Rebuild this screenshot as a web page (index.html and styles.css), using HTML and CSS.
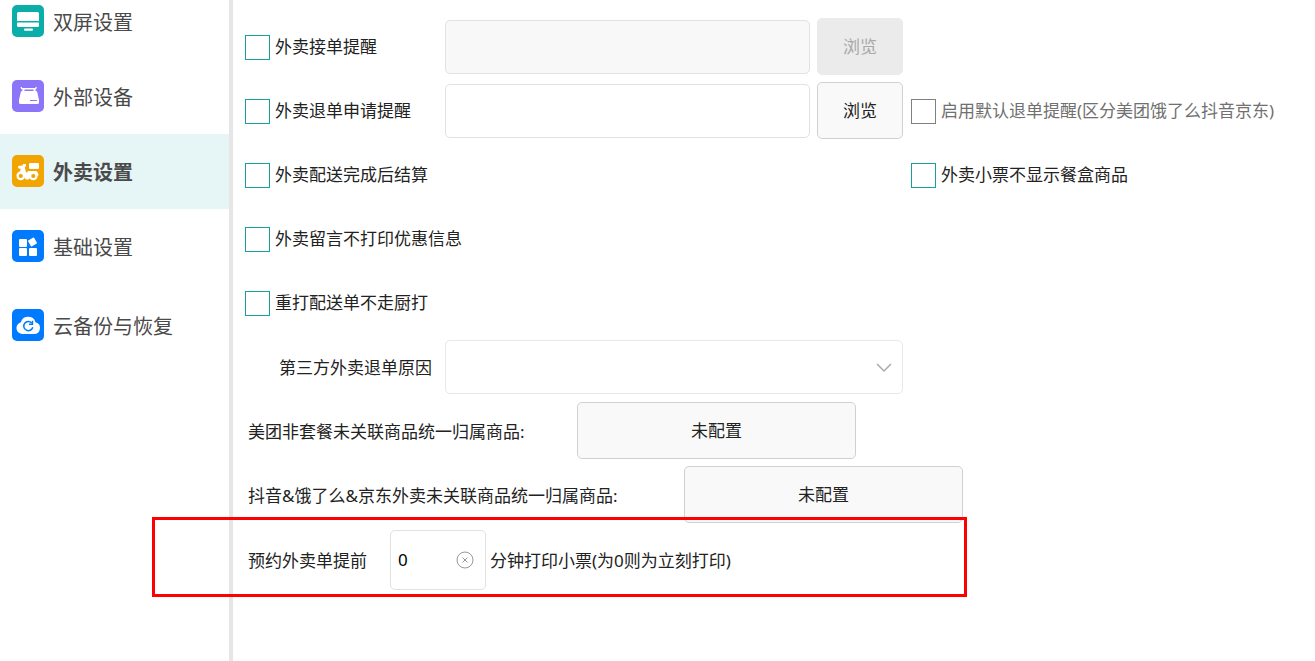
FILE: index.html
```html
<!DOCTYPE html>
<html lang="zh-CN">
<head>
<meta charset="utf-8">
<meta name="viewport" content="width=device-width, initial-scale=1.0">
<title>外卖设置</title>
<link rel="stylesheet" href="styles.css">
</head>
<body>

<div class="page">

  <!-- Sidebar -->
  <nav class="sidebar">
    <a class="nav-item" href="#screen">
      <svg class="nav-icon" viewBox="0 0 32 32">
        <rect width="32" height="32" rx="5" fill="#0aada8"/>
        <path d="M6.500 7h19q1.500 0 1.500 1.500V16H5V8.500Q5 7 6.500 7zM5 17.500h22v3q0 1.500-1.500 1.500h-19Q5 22 5 20.500z" fill="#fff"/>
        <rect x="12" y="23.500" width="9" height="2.200" rx="1" fill="#fff"/>
      </svg>
      <span>双屏设置</span>
    </a>
    <a class="nav-item" href="#device">
      <svg class="nav-icon" viewBox="0 0 32 32">
        <rect width="32" height="32" rx="5" fill="#8c75f9"/>
        <path d="M9 7.200l1 1.600h13.500l1-1.600" fill="none" stroke="#fff" stroke-width="1.400"/>
        <path d="M10 11h14q1 0 1.200 1L27 20v2.500q0 1.500-1.500 1.500h-17Q7 24 7 22.500V20l1.800-8q.2-1 1.200-1z" fill="#fff"/>
        <path d="M11.500 9v2.500M22.500 9v2.500" stroke="#fff" stroke-width="2"/>
        <path d="M18.500 20.500h6" stroke="#8c75f9" stroke-width="1.200" stroke-linecap="round"/>
      </svg>
      <span>外部设备</span>
    </a>
    <a class="nav-item active" href="#takeout">
      <svg class="nav-icon" viewBox="0 0 32 32">
        <rect width="32" height="32" rx="5" fill="#f2a500"/>
        <rect x="17" y="8" width="10" height="6" rx="1.200" fill="#fff"/>
        <path d="M6 12q0-1.300 1.200-1.300l3.300-.2.600-1.500h2.900v2.500l-1.200.3.800 4.200q.3 1.500 1.400 1.500.8 0 .8-1.500h8.500q1.500.8 2 3l.2 1.500-2 .5H8l-3.500-.5q.3-3 3.500-4.200l.8-2.500-2.300-.3z" fill="#fff"/>
        <circle cx="8.800" cy="21" r="3.200" fill="#f2a500" stroke="#fff" stroke-width="2.200"/>
        <circle cx="21.300" cy="21" r="3.200" fill="#f2a500" stroke="#fff" stroke-width="2.200"/>
        <path d="M12 19.500h6V23l-1.500 1.500H14L12.500 23z" fill="#fff"/>
      </svg>
      <span>外卖设置</span>
    </a>
    <a class="nav-item" href="#basic">
      <svg class="nav-icon" viewBox="0 0 32 32">
        <rect width="32" height="32" rx="5" fill="#007bff"/>
        <g fill="#fff">
          <rect x="7" y="9" width="8" height="8" rx="1"/>
          <rect x="7" y="18" width="8" height="8" rx="1"/>
          <rect x="17" y="18" width="8" height="8" rx="1"/>
          <rect x="17" y="8.500" width="7" height="7" rx="1" transform="rotate(-30 20.500 12)"/>
        </g>
      </svg>
      <span>基础设置</span>
    </a>
    <a class="nav-item last" href="#backup">
      <svg class="nav-icon" viewBox="0 0 32 32">
        <rect width="32" height="32" rx="5" fill="#007bff"/>
        <path d="M10.500 25a6 6 0 0 1-1.600-11.800 7.600 7.600 0 0 1 14.600 0A6 6 0 0 1 22 25z" fill="#fff"/>
        <path d="M19.800 14a4.600 4.600 0 1 0 1 4.300" fill="none" stroke="#007bff" stroke-width="1.500"/>
        <path d="M20.500 11.700v3.500H17" fill="none" stroke="#007bff" stroke-width="1.400"/>
      </svg>
      <span>云备份与恢复</span>
    </a>
  </nav>

  <!-- Settings -->
  <main class="settings">
    <div class="row">
      <label class="check"><input type="checkbox">外卖接单提醒</label>
      <input class="field" type="text" aria-label="外卖接单提醒" disabled>
      <button class="btn" type="button" disabled>浏览</button>
    </div>

    <div class="row">
      <label class="check"><input type="checkbox">外卖退单申请提醒</label>
      <input class="field" type="text" aria-label="外卖退单申请提醒">
      <button class="btn" type="button">浏览</button>
      <label class="check muted"><input type="checkbox" disabled>启用默认退单提醒(区分美团饿了么抖音京东)</label>
    </div>

    <div class="row">
      <label class="check"><input type="checkbox">外卖配送完成后结算</label>
      <label class="check extra"><input type="checkbox">外卖小票不显示餐盒商品</label>
    </div>

    <div class="row">
      <label class="check"><input type="checkbox">外卖留言不打印优惠信息</label>
    </div>

    <div class="row">
      <label class="check"><input type="checkbox">重打配送单不走厨打</label>
    </div>

    <div class="row">
      <label class="reason" for="reason">第三方外卖退单原因</label>
      <div class="select-wrap">
        <select class="select" id="reason"><option></option></select>
        <svg class="arrow" viewBox="0 0 16 10"><path d="M1 1l7 7 7-7" fill="none" stroke="#aaa" stroke-width="1.500"/></svg>
      </div>
    </div>

    <div class="line">
      <label class="goods" for="meituan">美团非套餐未关联商品统一归属商品:</label>
      <button class="btn wide" id="meituan" type="button">未配置</button>
    </div>

    <div class="line">
      <label class="goods long" for="douyin">抖音&amp;饿了么&amp;京东外卖未关联商品统一归属商品:</label>
      <button class="btn wide" id="douyin" type="button">未配置</button>
    </div>

    <div class="line advance">
      <label class="minutes-label" for="minutes">预约外卖单提前</label>
      <div class="minutes">
        <input id="minutes" type="text" value="0">
        <button class="clear" type="button" aria-label="清除">
          <svg viewBox="0 0 18 18" fill="none" stroke="#999"><circle cx="9" cy="9" r="8"/><path d="M6.500 6.500l5 5M11.500 6.500l-5 5"/></svg>
        </button>
      </div>
      <span class="unit">分钟打印小票(为0则为立刻打印)</span>
      <div class="highlight"></div>
    </div>
  </main>

</div>

</body>
</html>
```
FILE: styles.css
```css
* {box-sizing: border-box;}

body {
  margin: 0;
  background: #fff;
  color: #222;
  font-family: "Noto Sans", "Noto Sans CJK SC", sans-serif;
  font-size: 17px;
  line-height: 24px;
  overflow: hidden;
}

input, button, select {
  margin: 0;
  font: inherit;
  color: inherit;
}

.page {
  display: flex;
  min-height: 100vh;
}

/* sidebar, scrolled a little way down */
.sidebar {
  flex: none;
  width: 233px;
  margin-top: -16px;
  border-right: 4px solid #e6e6e6;
}

.nav-item {
  display: flex;
  align-items: center;
  gap: 9px;
  height: 75px;
  padding-left: 12px;
  color: #4a4a4a;
  font-size: 20px;
  text-decoration: none;
}

.nav-item span {
  padding-top: 2px;
}

.nav-item.active {
  background: #e6f5f5;
  font-weight: bold;
}

.nav-item.last {
  height: 83px;
}

.nav-icon {
  width: 32px;
  height: 32px;
  margin-bottom: 2px;
}

/* settings */
.settings {
  flex: 1;
  min-width: 0;
  padding: 15px 12px 0;
  white-space: nowrap;
}

.row {
  display: grid;
  grid-template-columns: 200px 372px 94px 1fr;
  align-items: center;
  height: 64px;
}

.line {
  display: flex;
  align-items: center;
  height: 64px;
  padding-left: 3px;
}

.check {
  display: flex;
  align-items: center;
  gap: 5px;
}

.check input {
  appearance: none;
  flex: none;
  width: 25px;
  height: 25px;
  border: 1px solid #1a9e9c;
  background: #fff;
}

.check input:checked {
  background: #1a9e9c;
}

.check input:disabled {
  border-color: #808080;
}

.muted {
  color: #707070;
}

.extra {
  grid-column: 4;
}

.field {
  width: 365px;
  height: 54px;
  padding: 0 8px;
  border: 1px solid #e2e2e2;
  border-radius: 5px;
  background: #fff;
}

.field:disabled {
  background: #f8f8f8;
}

.btn {
  width: 86px;
  height: 57px;
  margin-bottom: 2px;
  padding: 2px 0 0;
  border: 1px solid #d0d0d0;
  border-radius: 5px;
  background: #f9f9f9;
}

.btn:disabled {
  border-color: #ebebeb;
  background: #ebebeb;
  color: #a8a8a8;
}

.btn.wide {
  width: 279px;
}

.reason {
  padding: 2px 13px 0 0;
  text-align: right;
}

.select-wrap {
  position: relative;
  grid-column: 2 / 4;
  width: 458px;
}

.select {
  display: block;
  appearance: none;
  width: 100%;
  height: 54px;
  padding: 0 40px 0 8px;
  border: 1px solid #e8e8e8;
  border-radius: 5px;
  background: #fff;
}

.arrow {
  position: absolute;
  top: 23px;
  right: 11px;
  width: 16px;
  height: 10px;
  pointer-events: none;
}

.goods,
.minutes-label,
.unit {
  padding-top: 2px;
}

.goods {
  width: 329px;
}

.goods.long {
  width: 436px;
}

.advance {
  position: relative;
  height: 66px;
}

.minutes-label {
  width: 142px;
}

.minutes {
  display: flex;
  align-items: center;
  width: 96px;
  height: 60px;
  margin-right: 4px;
  padding: 0 11px 0 7px;
  border: 1px solid #e2e2e2;
  border-radius: 5px;
}

.minutes input {
  flex: 1;
  width: 0;
  padding: 0;
  border: 0;
  outline: 0;
  background: none;
  color: #000;
}

.clear {
  width: 18px;
  height: 18px;
  padding: 0;
  border: 0;
  background: none;
}

.clear svg {
  display: block;
}

/* red frame round the print-ahead setting */
.highlight {
  position: absolute;
  top: -10px;
  left: -93px;
  width: 815px;
  height: 80px;
  border: 3px solid #f00;
  pointer-events: none;
}
```
